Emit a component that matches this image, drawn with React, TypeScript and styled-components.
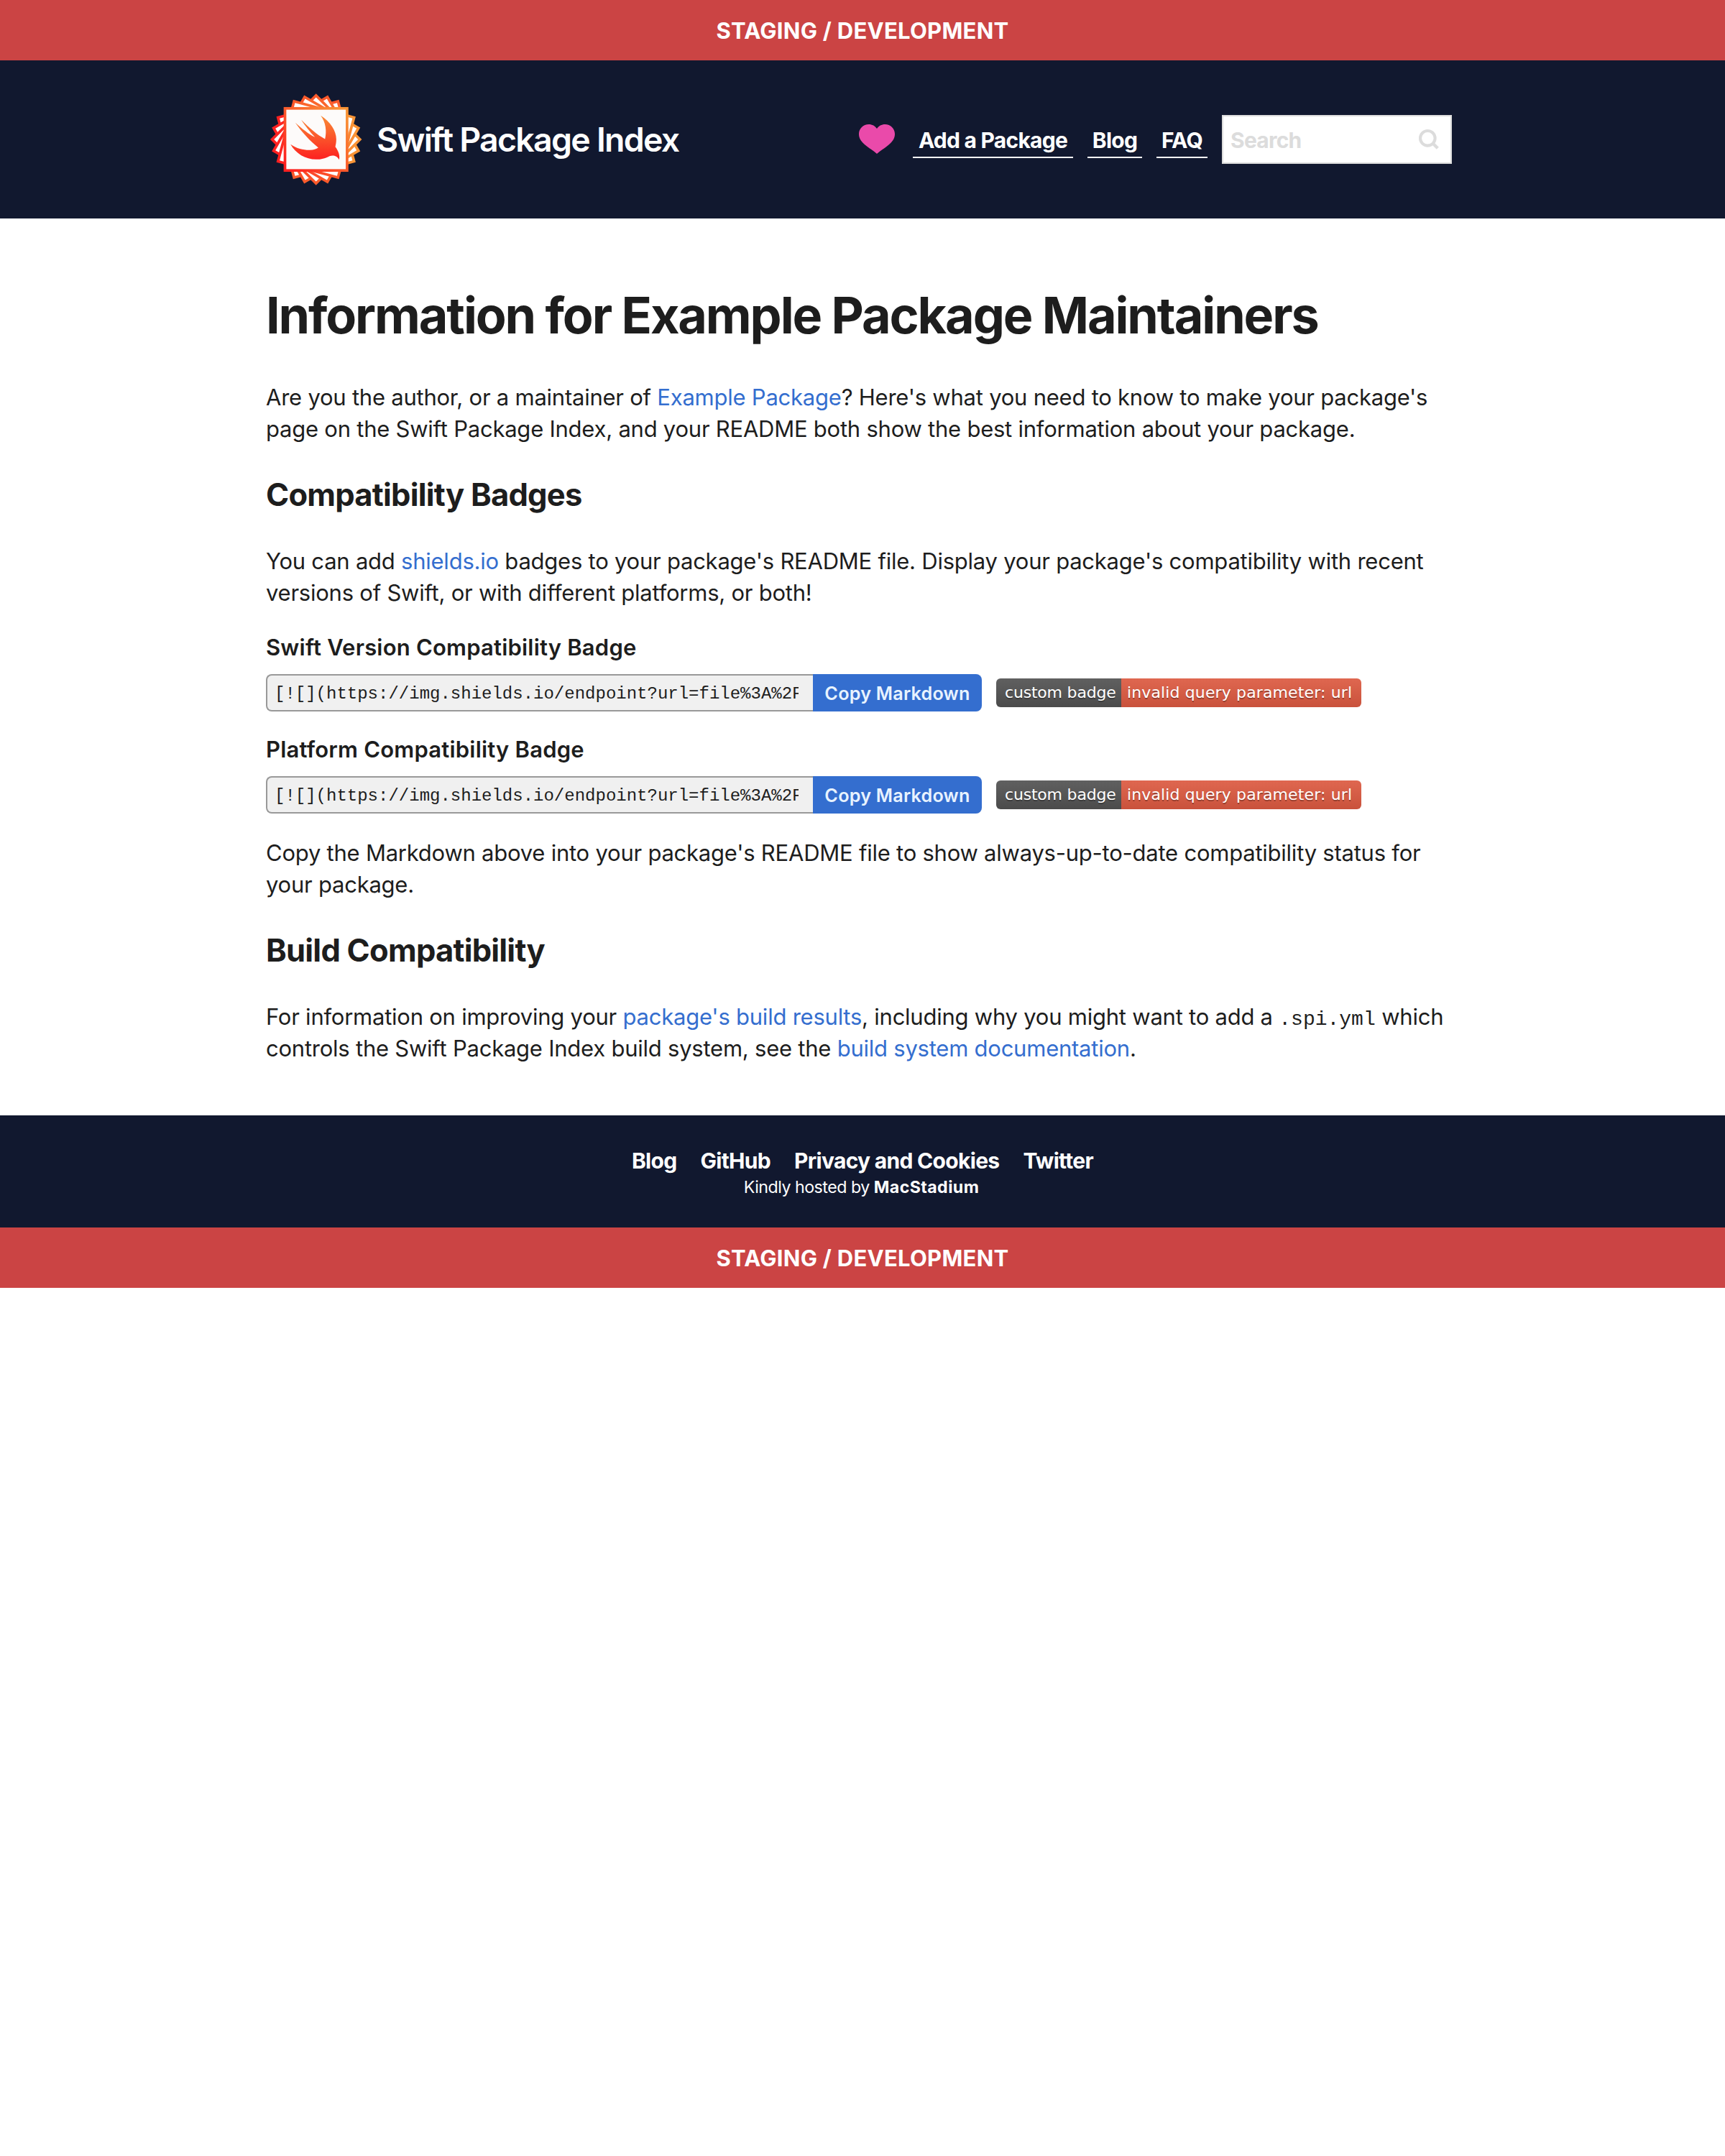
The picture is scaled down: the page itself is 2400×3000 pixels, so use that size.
import React from "react";
import styled, { createGlobalStyle } from "styled-components";

const GlobalStyle = createGlobalStyle`
  *, *::before, *::after { box-sizing: border-box; }
  body {
    margin: 0;
    background: #fff;
    color: #1d1d1d;
    font-family: Inter, "Liberation Sans", sans-serif;
    font-size: 31px;
    line-height: 44px;
    -webkit-font-smoothing: antialiased;
  }
  h1, h2, h3, p { margin: 0; font-weight: inherit; }
  a { color: inherit; text-decoration: none; }
`;

const StagingBanner = styled.div`
  display: flex;
  justify-content: center;
  height: 84px;
  padding-top: 21px;
  background: #cb4444;
  color: #fff;
  font-weight: 700;
  letter-spacing: 0.27px;
`;

const Container = styled.div`
  width: 1660px;
  margin: 0 auto;
  white-space: nowrap;
`;

const Header = styled.header`
  height: 220px;
  background: #11182f;
  color: #fff;
`;

const HeaderInner = styled(Container)`
  display: flex;
  align-items: center;
  justify-content: space-between;
  height: 100%;
  padding-right: 10px;
`;

const Brand = styled.a`
  display: flex;
  align-items: center;
  gap: 14px;
`;

const BrandLogo = styled.svg`
  width: 140px;
  height: 140px;
  margin-top: -1px;
`;

const BrandName = styled.span`
  font-size: 46.4px;
  line-height: 56px;
  font-weight: 600;
  letter-spacing: -1.72px;
`;

const Nav = styled.nav`
  display: flex;
  align-items: center;
  gap: 20px;
  font-size: 30px;
  font-weight: 700;
  letter-spacing: -0.75px;
`;

const Heart = styled.svg`
  display: block;
  width: 50px;
  height: 41px;
  margin: -2px 5px 0 0;
`;

const NavLink = styled.a<{ $width: number }>`
  width: ${(p) => p.$width}px;
  height: 48px;
  margin-top: 4px;
  padding-top: 1px;
  border-bottom: 2px solid #fff;
  text-align: center;
`;

const SearchBox = styled.div`
  display: flex;
  align-items: center;
  justify-content: space-between;
  width: 320px;
  height: 68px;
  padding: 2px 15px 0 10px;
  border: 2px solid #dcdcdc;
  background: #fff;
  color: #dcdcdc;
`;

const SearchIcon = styled.svg`
  width: 30px;
  height: 30px;
  margin-top: -2px;
`;

const Main = styled.main`
  padding: 92px 0 71px;
`;

const Title = styled.h1`
  margin-bottom: 49px;
  font-size: 70px;
  line-height: 86px;
  font-weight: 700;
  letter-spacing: -2.1px;
`;

const SectionTitle = styled.h2`
  margin: 42px 0 44px;
  font-size: 43.5px;
  line-height: 54px;
  font-weight: 700;
  letter-spacing: -0.76px;
`;

const BadgeTitle = styled.h3<{ $gap: number }>`
  margin: ${(p) => p.$gap}px 0 15px;
  font-size: 31px;
  font-weight: 600;
  letter-spacing: 0.2px;
`;

const Paragraph = styled.p<{ $gap?: number }>`
  margin-top: ${(p) => p.$gap ?? 0}px;
  letter-spacing: -0.235px;
`;

const Link = styled.a`
  color: #346ecf;
`;

const Code = styled.code`
  font-family: "Courier", "Liberation Mono", monospace;
  font-size: 28px;
  line-height: 1;
  letter-spacing: 0;
`;

const BadgeRow = styled.div`
  display: flex;
  align-items: center;
  height: 52px;
`;

const MarkdownInput = styled.input`
  width: 761px;
  height: 52px;
  padding: 2px 20px 0 10px;
  border: 2px solid #999;
  border-right: 0;
  border-radius: 8px 0 0 8px;
  background: #f0f0f0;
  color: #1d1d1d;
  font-family: "Courier", "Liberation Mono", monospace;
  font-size: 24px;
  outline: none;
`;

const CopyButton = styled.button`
  width: 235px;
  height: 52px;
  margin-right: 20px;
  padding: 2px 0 0;
  border: 0;
  border-radius: 0 8px 8px 0;
  background: #346ecf;
  color: #e8f3ff;
  font: 600 25.2px/50px Inter, "Liberation Sans", sans-serif;
  letter-spacing: 0.22px;
`;

const Shield = styled.span`
  display: flex;
  height: 40px;
  border-radius: 6px;
  overflow: hidden;
  color: #fff;
  font: 22px/40px Verdana, "DejaVu Sans", sans-serif;
  text-shadow: 0 2px 0 rgba(1, 1, 1, 0.3);
`;

const ShieldPart = styled.span<{ $width: number; $from: string; $to: string; $shift: number; $track: number }>`
  width: ${(p) => p.$width}px;
  padding-left: ${(p) => p.$shift}px;
  background: linear-gradient(${(p) => p.$from}, ${(p) => p.$to});
  letter-spacing: ${(p) => p.$track}px;
`;

const Footer = styled.footer`
  display: flex;
  flex-direction: column;
  align-items: center;
  height: 156px;
  padding-top: 41px;
  background: #11182f;
  color: #fff;
`;

const FooterLinks = styled.div`
  display: flex;
  gap: 33px;
  font-size: 30px;
  font-weight: 700;
  letter-spacing: -0.7px;
`;

const Hosted = styled.small`
  margin-top: -1px;
  padding-right: 3px;
  font-size: 23.2px;
  line-height: 32px;
  letter-spacing: -0.5px;
  b { font-weight: 700; letter-spacing: 0.4px; }
`;

const TILTS = [75, 60, 45, 30, 15];

function Logo() {
  return (
    <BrandLogo viewBox="-69.700 -70 140 140">
      <defs>
        <linearGradient id="frame" x1="0" y1="1" x2="1" y2="0">
          <stop offset="0.05" stopColor="#fd2020" />
          <stop offset="0.95" stopColor="#f99436" />
        </linearGradient>
        <linearGradient id="bird" x1="0" y1="0" x2="0" y2="1">
          <stop offset="0" stopColor="#f98b35" />
          <stop offset="1" stopColor="#fd2020" />
        </linearGradient>
      </defs>
      {TILTS.map((tilt) => (
        <rect key={tilt} x="-43.2" y="-43.2" width="86.4" height="86.4" fill="#fff" stroke="url(#frame)" strokeWidth="3.7" transform={`rotate(${tilt})`} />
      ))}
      <rect x="-43.2" y="-43.2" width="86.4" height="86.4" fill="#fdfbfa" stroke="url(#frame)" strokeWidth="3.7" />
      <path
        transform="scale(0.33333) translate(-239.5 -250.5)"
        fill="url(#bird)"
        d="M259 151C300 178 324 215 324 250C324 263 322 272 320 281C334 300 340 318 336 335C326 318 312 316 296 320C275 330 262 334 240 334C195 334 155 310 133 271C160 290 190 296 215 295C230 294 240 290 249 285C215 258 180 220 153 181C180 205 210 230 235 241C215 220 192 192 178 169C210 202 245 232 277 249C285 215 280 180 259 151Z"
      />
    </BrandLogo>
  );
}

const MARKDOWN = "[![](https://img.shields.io/endpoint?url=file%3A%2F";

function BadgeLine() {
  return (
    <BadgeRow>
      <MarkdownInput readOnly value={MARKDOWN} />
      <CopyButton>Copy Markdown</CopyButton>
      <Shield>
        <ShieldPart $width={174} $shift={12} $track={-0.2} $from="#606060" $to="#4b4b4b">custom badge</ShieldPart>
        <ShieldPart $width={334} $shift={8} $track={0.13} $from="#df6750" $to="#c9523c">invalid query parameter: url</ShieldPart>
      </Shield>
    </BadgeRow>
  );
}

export default function App() {
  return (
    <>
      <GlobalStyle />
      <StagingBanner>STAGING / DEVELOPMENT</StagingBanner>
      <Header>
        <HeaderInner>
          <Brand>
            <Logo />
            <BrandName>Swift Package Index</BrandName>
          </Brand>
          <Nav>
            <Heart viewBox="0 0 50 41">
              <path fill="#ea4aaa" d="M25 41C20 36.500 16 34.500 11 30.500C4 25 0 20.500 0 13.500C0 6 6 0 13.700 0C18.500 0 22.500 2.300 25 6C27.500 2.300 31.500 0 36.300 0C44 0 50 6 50 13.500C50 20.500 46 25 39 30.500C34 34.500 30 36.500 25 41Z" />
            </Heart>
            <NavLink $width={223}>Add a Package</NavLink>
            <NavLink $width={76}>Blog</NavLink>
            <NavLink $width={71}>FAQ</NavLink>
            <SearchBox>
              <span>Search</span>
              <SearchIcon viewBox="0 0 30 30" fill="none" stroke="#dcdcdc" strokeWidth="4.1">
                <circle cx="13.300" cy="13.300" r="10.300" />
                <path d="M20.500 20.500L27.300 27.300" strokeWidth="4.4" />
              </SearchIcon>
            </SearchBox>
          </Nav>
        </HeaderInner>
      </Header>
      <Main>
        <Container>
          <Title>Information for Example Package Maintainers</Title>
          <Paragraph>
            Are you the author, or a maintainer of <Link>Example Package</Link>? Here's what you need to know to make your package's
            <br />
            page on the Swift Package Index, and your README both show the best information about your package.
          </Paragraph>
          <SectionTitle>Compatibility Badges</SectionTitle>
          <Paragraph>
            You can add <Link>shields.io</Link> badges to your package's README file. Display your package's compatibility with recent
            <br />
            versions of Swift, or with different platforms, or both!
          </Paragraph>
          <BadgeTitle $gap={32}>Swift Version Compatibility Badge</BadgeTitle>
          <BadgeLine />
          <BadgeTitle $gap={31}>Platform Compatibility Badge</BadgeTitle>
          <BadgeLine />
          <Paragraph $gap={33}>
            Copy the Markdown above into your package's README file to show always-up-to-date compatibility status for
            <br />
            your package.
          </Paragraph>
          <SectionTitle>Build Compatibility</SectionTitle>
          <Paragraph>
            For information on improving your <Link>package's build results</Link>, including why you might want to add a <Code>.spi.yml</Code> which
            <br />
            controls the Swift Package Index build system, see the <Link>build system documentation</Link>.
          </Paragraph>
        </Container>
      </Main>
      <Footer>
        <FooterLinks>
          <a>Blog</a>
          <a>GitHub</a>
          <a>Privacy and Cookies</a>
          <a>Twitter</a>
        </FooterLinks>
        <Hosted>
          Kindly hosted by <b>MacStadium</b>
        </Hosted>
      </Footer>
      <StagingBanner>STAGING / DEVELOPMENT</StagingBanner>
    </>
  );
}
